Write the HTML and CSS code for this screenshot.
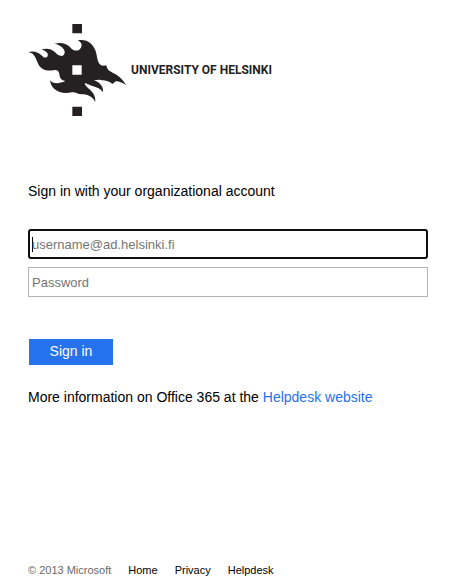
FILE: index.html
```html
<!DOCTYPE html>
<html lang="en">
<head>
<meta charset="utf-8">
<meta name="viewport" content="width=device-width, initial-scale=1">
<title>Sign In</title>
<link rel="stylesheet" href="styles.css">
</head>
<body>
<div class="page">
  <header class="brand">
    <svg class="flame" viewBox="24 24 297 276" aria-hidden="true">
      <path d="M157 24h29v28h-29zM157 272h29v28h-29z"/>
      <path fill-rule="evenodd" d="M25 108C42 103 56 109 66 119C72 126 80 127 83 120C86 110 76 103 64 101C79 96 94 98 105 109C114 119 125 123 131 117C141 106 127 88 104 83C122 78 139 82 149 92C158 103 169 107 178 101C190 91 185 78 173 73C200 67 218 82 226 103C233 122 230 139 243 148C250 151 256 147 260 150C260 163 275 168 287 175C301 184 310 194 318 207C302 197 291 194 285 197C281 200 281 204 276 203C265 193 251 194 242 192C235 190 229 193 222 193C242 200 251 213 249 229C241 215 222 213 204 205C200 203 196 201 194 202C198 219 228 224 226 258C216 239 200 235 185 235C172 235 167 227 156 229C119 238 92 219 90 193C99 205 119 203 136 195C120 193 119 181 118 174C117 166 112 161 103 162C83 167 63 162 55 145C47 126 44 112 25 108ZM157 148v28h28v-28z"/>
    </svg>
    <span class="brand-name">UNIVERSITY OF HELSINKI</span>
  </header>
  <main>
    <h1 class="title">Sign in with your organizational account</h1>
    <form class="login">
      <input class="field" type="email" aria-label="Username" placeholder="username@ad.helsinki.fi" autofocus>
      <input class="field" type="password" aria-label="Password" placeholder="Password">
      <button class="submit" type="submit">Sign in</button>
    </form>
    <p class="help">More information on Office 365 at the <a href="#helpdesk">Helpdesk website</a></p>
  </main>
  <footer class="footer">
    <span>© 2013 Microsoft</span>
    <a href="#home">Home</a>
    <a href="#privacy">Privacy</a>
    <a href="#helpdesk">Helpdesk</a>
  </footer>
</div>
</body>
</html>
```
FILE: styles.css
```css
* {
  box-sizing: border-box;
}

body {
  margin: 0;
  background: #fff;
  color: #000;
  font: 14px/20px "Liberation Sans", Arial, sans-serif;
}

.page {
  display: flex;
  flex-direction: column;
  min-height: 100vh;
  padding: 24px 23px 8px 28px;
}

.brand {
  display: flex;
  align-items: center;
  gap: 4px;
  margin-bottom: 65px;
}

.flame {
  width: 99px;
  height: 92px;
  fill: #252122;
}

.brand-name {
  color: #252122;
  font: 700 12px/16px Roboto, sans-serif;
  white-space: nowrap;
}

.title {
  margin: 0 0 28px;
  font-size: inherit;
  font-weight: 400;
}

.login {
  display: flex;
  flex-direction: column;
  gap: 8px;
}

.field {
  width: 100%;
  height: 30px;
  padding: 0 3px;
  border: 1px solid #b3b3b3;
  border-radius: 0;
  background: #fff;
  font: 13px "Liberation Sans", Arial, sans-serif;
}

.field::placeholder {
  color: #757575;
}

.field:focus {
  outline: 2px solid #101010;
  outline-offset: -2px;
  border-radius: 3px;
}

/* Steady caret while the focused field is empty */
.field:focus:placeholder-shown {
  background: linear-gradient(#000, #000) 3px center / 1px 15px no-repeat #fff;
  caret-color: transparent;
}

.submit {
  align-self: flex-start;
  min-width: 84px;
  margin: 34px 1px 22px;
  padding: 2px 16px 4px;
  border: 0;
  background: #2672ec;
  color: #fff;
  font: inherit;
}

.help {
  margin: 0;
}

a {
  color: #2672ec;
  text-decoration: none;
}

.footer {
  display: flex;
  gap: 17px;
  margin-top: auto;
  color: #696969;
  font-size: 11px;
  line-height: 14px;
}

.footer a {
  color: #000;
}
```
